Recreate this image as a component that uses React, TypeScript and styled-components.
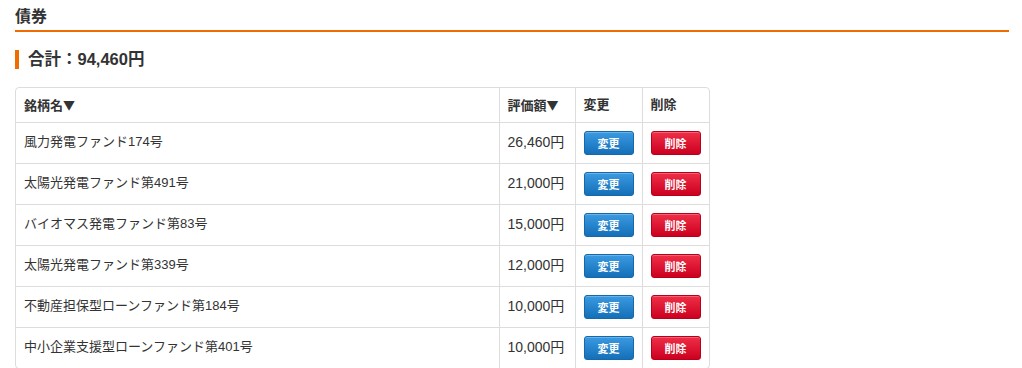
import React from "react";
import styled, { createGlobalStyle } from "styled-components";

const Global = createGlobalStyle`
  html, body { margin: 0; padding: 0; background: #fff; }
  body {
    font-family: "Liberation Sans", "Noto Sans CJK JP", sans-serif;
    color: #333;
    font-size: 13px;
  }
  *, *::before, *::after { box-sizing: border-box; }
`;

const Page = styled.div`
  padding: 6px 13px 0 15px;
`;

const Title = styled.h2`
  margin: 0;
  font-size: 16px;
  font-weight: bold;
  line-height: 22px;
  padding-bottom: 2px;
  border-bottom: 2px solid #ef6d00;
`;

const Total = styled.h3`
  margin: 18px 0 0 0;
  font-size: 16.5px;
  font-weight: bold;
  line-height: 19px;
  padding-left: 9px;
  border-left: 4px solid #ef6d00;
`;

const TableWrap = styled.div`
  margin-top: 18px;
  width: 695px;
  border: 1px solid #ddd;
  border-radius: 4px;
  overflow: hidden;
`;

const Table = styled.table`
  width: 100%;
  border-collapse: collapse;
  table-layout: fixed;
`;

const Th = styled.th<{ $w?: number }>`
  width: ${(p) => (p.$w ? `${p.$w}px` : "auto")};
  text-align: left;
  font-weight: bold;
  padding: 8px 8px 7px;
  line-height: 18px;
  font-size: 13px;
  vertical-align: top;
  border-left: 1px solid #ddd;
  &:first-child { border-left: none; }
`;

const Arrow = styled.span`
  font-family: "Noto Sans CJK JP", sans-serif;
  font-size: 12px;
`;

const Td = styled.td<{ $num?: boolean }>`
  padding: 8px;
  line-height: 18px;
  font-size: ${(p) => (p.$num ? "14px" : "13px")};
  vertical-align: top;
  border-top: 1px solid #ddd;
  border-left: 1px solid #ddd;
  &:first-child { border-left: none; }
`;

const CellText = styled.span`
  display: inline-block;
  padding-top: 2px;
`;

const Btn = styled.button<{ $kind: "blue" | "red" }>`
  display: block;
  width: 50px;
  height: 24px;
  padding: 0;
  border-radius: 3px;
  font-family: "Liberation Sans", "Noto Sans CJK JP", sans-serif;
  font-size: 11px;
  font-weight: bold;
  color: #fff;
  cursor: pointer;
  border: 1px solid ${(p) => (p.$kind === "blue" ? "#1768a8" : "#b8001a")};
  background: ${(p) =>
    p.$kind === "blue"
      ? "linear-gradient(#3a9ae2, #1470b8)"
      : "linear-gradient(#ef2f47, #cc0020)"};
  box-shadow: inset 0 1px 0 rgba(255, 255, 255, 0.25);
`;

const rows = [
  ["風力発電ファンド174号", "26,460円"],
  ["太陽光発電ファンド第491号", "21,000円"],
  ["バイオマス発電ファンド第83号", "15,000円"],
  ["太陽光発電ファンド第339号", "12,000円"],
  ["不動産担保型ローンファンド第184号", "10,000円"],
  ["中小企業支援型ローンファンド第401号", "10,000円"],
];

export default function App() {
  return (
    <>
      <Global />
      <Page>
        <Title>債券</Title>
        <Total>合計：94,460円</Total>
        <TableWrap>
          <Table>
            <thead>
              <tr>
                <Th>銘柄名<Arrow>▼</Arrow></Th>
                <Th $w={76}>評価額<Arrow>▼</Arrow></Th>
                <Th $w={67}>変更</Th>
                <Th $w={67}>削除</Th>
              </tr>
            </thead>
            <tbody>
              {rows.map(([name, val]) => (
                <tr key={name}>
                  <Td><CellText>{name}</CellText></Td>
                  <Td $num><CellText>{val}</CellText></Td>
                  <Td><Btn $kind="blue">変更</Btn></Td>
                  <Td><Btn $kind="red">削除</Btn></Td>
                </tr>
              ))}
            </tbody>
          </Table>
        </TableWrap>
      </Page>
    </>
  );
}
